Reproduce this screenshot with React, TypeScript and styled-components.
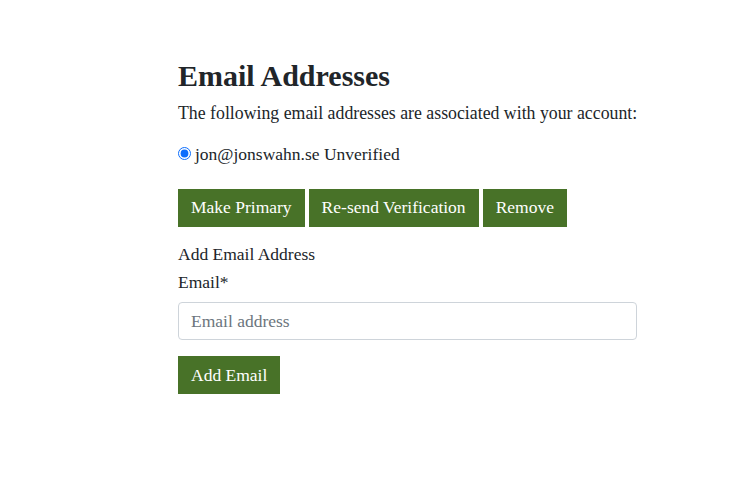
import styled, { createGlobalStyle } from "styled-components";

const GlobalStyle = createGlobalStyle`
  * { box-sizing: border-box; }
  body {
    margin: 0;
    background: #fff;
    color: #212529;
    font-family: "Liberation Serif", "DejaVu Serif", serif;
  }
`;

const Page = styled.main`
  display: flex;
  padding: 58px 0 0 178px;
`;

const Content = styled.section`
  width: 459px;
  display: flex;
  flex-direction: column;
`;

const Heading = styled.h1`
  margin: 0 0 6px;
  font-size: 30px;
  font-weight: 700;
  line-height: 1.2;
`;

const Lead = styled.p`
  margin: 0 0 14px;
  font-size: 17.8px;
  line-height: 1.5;
  white-space: nowrap;
`;

const RadioRow = styled.label`
  display: flex;
  align-items: center;
  gap: 4px;
  font-size: 17.5px;
  line-height: 1.5;
  margin-bottom: 22px;
`;

const Radio = styled.input`
  margin: 0;
  width: 13px;
  height: 13px;
  accent-color: #0d6efd;
`;

const ButtonRow = styled.div`
  display: flex;
  gap: 4px;
  margin-bottom: 14px;
`;

const Button = styled.button`
  height: 38px;
  padding: 0 13px;
  border: none;
  border-radius: 0;
  background: #487228;
  color: #fff;
  font-family: inherit;
  font-size: 17.5px;
  cursor: pointer;
`;

const SubHeading = styled.h2`
  margin: 0 0 2px;
  font-size: 17.5px;
  font-weight: 400;
  line-height: 1.5;
`;

const Label = styled.label`
  font-size: 17.5px;
  line-height: 1.5;
  margin-bottom: 7px;
`;

const Input = styled.input`
  width: 100%;
  height: 38px;
  padding: 0 12px;
  border: 1px solid #ced4da;
  border-radius: 4px;
  font-family: inherit;
  font-size: 17.5px;
  color: #212529;
  margin-bottom: 16px;
  &::placeholder { color: #6c757d; }
`;

const Form = styled.form`
  display: flex;
  flex-direction: column;
  align-items: flex-start;
`;

export default function App() {
  return (
    <>
      <GlobalStyle />
      <Page>
        <Content>
          <Heading>Email Addresses</Heading>
          <Lead>The following email addresses are associated with your account:</Lead>
          <RadioRow>
            <Radio type="radio" name="email" defaultChecked />
            jon@jonswahn.se Unverified
          </RadioRow>
          <ButtonRow>
            <Button>Make Primary</Button>
            <Button>Re-send Verification</Button>
            <Button>Remove</Button>
          </ButtonRow>
          <SubHeading>Add Email Address</SubHeading>
          <Form onSubmit={(e) => e.preventDefault()}>
            <Label htmlFor="email">Email*</Label>
            <Input id="email" type="email" placeholder="Email address" />
            <Button type="submit">Add Email</Button>
          </Form>
        </Content>
      </Page>
    </>
  );
}
